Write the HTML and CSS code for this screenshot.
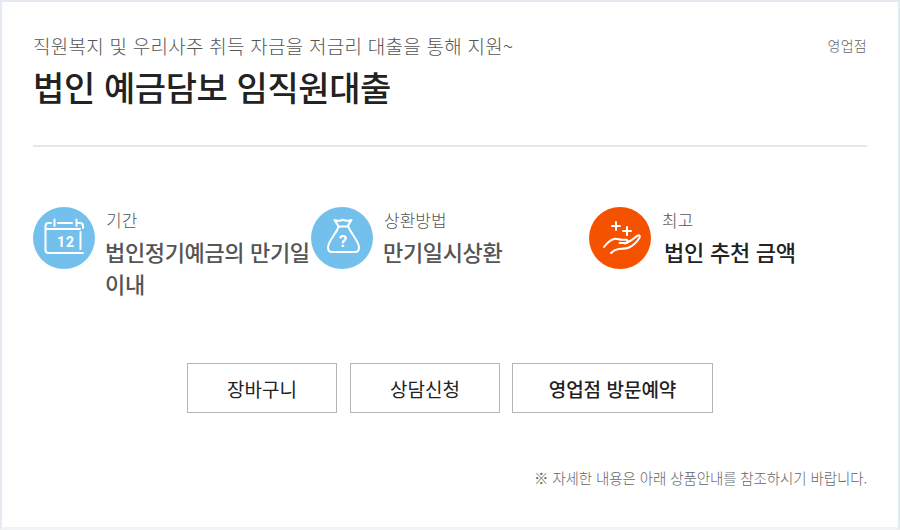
FILE: index.html
```html
<!DOCTYPE html>
<html lang="ko">
<head>
<meta charset="utf-8">
<title>법인 예금담보 임직원대출</title>
<link rel="stylesheet" href="styles.css">
</head>
<body>
<main class="card">
  <header class="head">
    <div class="head-top">
      <p class="sub">직원복지 및 우리사주 취득 자금을 저금리 대출을 통해 지원~</p>
      <span class="channel">영업점</span>
    </div>
    <h1 class="title">법인 예금담보 임직원대출</h1>
  </header>
  <section class="info">
    <div class="item">
      <span class="circle blue">
        <svg viewBox="0 0 62 62" width="62" height="62" fill="none" stroke="#fff" stroke-width="2" stroke-linecap="round" stroke-linejoin="round">
          <path d="M18 16h-2.500a3 3 0 0 0-3 3V43a3 3 0 0 0 3 3H50"/>
          <path d="M25 16H39"/>
          <path d="M45 16h2a3 3 0 0 1 3 3v2"/>
          <path d="M21.500 12.500v6.500M43.500 12.500v6.500"/>
          <path d="M13 22H47"/>
          <path d="M47.500 25v17"/>
          <text x="33" y="40" class="cal-num" text-anchor="middle" fill="#fff" stroke="none">12</text>
        </svg>
      </span>
      <div class="text">
        <div class="label">기간</div>
        <div class="value">법인정기예금의 만기일 이내</div>
      </div>
    </div>
    <div class="item">
      <span class="circle blue">
        <svg viewBox="0 0 62 62" width="62" height="62" fill="none" stroke="#fff" stroke-width="2" stroke-linecap="round" stroke-linejoin="round">
          <path d="M27.500 19.500c-.8-2-2.500-4-4-6.500 2.500.6 4.500 1.300 6 .5 1.600-.8 3.400-.8 5 0 1.500.8 3.500.1 6-.5-1.500 2.500-3.200 4.500-4 6.500z"/>
          <path d="M27.500 19.500c-.5 3-3 6-5.500 10-3 4.500-5 8-5 11 0 3 1.500 4.500 4 4.500h23c2.500 0 4-1.500 4-4.500 0-3-2-6.500-5-11-2.500-4-5-7-5.500-10"/>
          <text x="32" y="40" class="bag-mark" text-anchor="middle" fill="#fff" stroke="none">?</text>
        </svg>
      </span>
      <div class="text">
        <div class="label">상환방법</div>
        <div class="value">만기일시상환</div>
      </div>
    </div>
    <div class="item">
      <span class="circle orange">
        <svg viewBox="0 0 62 62" width="62" height="62" fill="none" stroke="#fff" stroke-width="2" stroke-linecap="round" stroke-linejoin="round">
          <path d="M27 15v8M23 19h8M38 20v8M34 24h8"/>
          <path d="M15 40c3-4 6-7 10-8 3-.7 5 .8 8 .8h4c2 0 2.500 3.200-.5 3.200h-6"/>
          <path d="M36 36.500l6-3c2.500-1.500 4.500-4 7-5 1.500-.5 2.500.8 1.500 2.300-2.500 4-6.500 8-10.500 9.700-4 1.700-7 1-10.500 1.500-3 .5-5.500 2-7.500 4"/>
        </svg>
      </span>
      <div class="text text-strong">
        <div class="label">최고</div>
        <div class="value">법인 추천 금액</div>
      </div>
    </div>
  </section>
  <nav class="actions">
    <a class="btn btn-wide" href="#">장바구니</a>
    <a class="btn btn-wide" href="#">상담신청</a>
    <a class="btn btn-long" href="#">영업점 방문예약</a>
  </nav>
  <p class="note">※ 자세한 내용은 아래 상품안내를 참조하시기 바랍니다.</p>
</main>
</body>
</html>
```
FILE: styles.css
```css
* { box-sizing: border-box; }
html, body { margin: 0; padding: 0; }
body {
  width: 900px;
  height: 530px;
  overflow: hidden;
  background: #fff;
  font-family: "Noto Sans CJK KR", "Noto Sans", sans-serif;
}
.card {
  width: 900px;
  height: 530px;
  border: solid #e4eaf1;
  border-width: 2px 2px 3px 2px;
  border-bottom-color: #f1f3f5;
  padding: 31px 31px 0;
  background: #fff;
}
.head {
  height: 114px;
  border-bottom: 2px solid #e3e7ee;
}
.head-top {
  display: flex;
  justify-content: space-between;
  align-items: flex-start;
}
.sub {
  margin: 0;
  font-size: 19px;
  line-height: 26px;
  font-weight: 300;
  color: #555;
  letter-spacing: 0.25px;
}
.channel {
  font-size: 14px;
  line-height: 24px;
  font-weight: 300;
  color: #666;
  letter-spacing: 0.3px;
}
.title {
  margin: 6px 0 0;
  font-size: 34px;
  line-height: 44px;
  font-weight: 500;
  color: #222;
  letter-spacing: -0.4px;
}
.info {
  display: grid;
  grid-template-columns: repeat(3, 278px);
  margin-top: 60px;
  height: 156px;
}
.item {
  display: flex;
  align-items: flex-start;
  gap: 11px;
}
.circle {
  flex: none;
  width: 62px;
  height: 62px;
  border-radius: 50%;
  display: block;
}
.circle svg { display: block; }
.blue { background: #74c0ec; }
.orange { background: #f55200; }
.cal-num { font: 700 14px "Roboto", sans-serif; letter-spacing: 1px; }
.bag-mark { font: 700 17px "Roboto", sans-serif; }
.text { width: 205px; }
.label {
  font-size: 17px;
  line-height: 26px;
  font-weight: 300;
  color: #555;
}
.value {
  margin: 2px 0 0 -1px;
  font-size: 22px;
  line-height: 32px;
  font-weight: 500;
  color: #555;
  letter-spacing: -0.35px;
  word-break: keep-all;
}
.text-strong .value {
  color: #222;
  padding-left: 3px;
  letter-spacing: -0.25px;
}
.actions {
  display: flex;
  justify-content: center;
  gap: 13px;
}
.btn {
  display: flex;
  align-items: center;
  justify-content: center;
  height: 50px;
  border: 1px solid #b5b5b5;
  font-size: 19px;
  color: #222;
  text-decoration: none;
  background: #fff;
}
.btn-wide { width: 150px; }
.btn-long { width: 201px; margin-left: -1px; font-weight: 500; }
.note {
  margin: 54px 0 0;
  font-size: 14.5px;
  line-height: 22px;
  font-weight: 300;
  color: #666;
  text-align: right;
  letter-spacing: -0.1px;
}
```
